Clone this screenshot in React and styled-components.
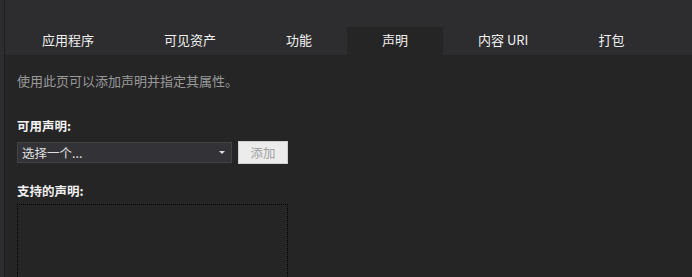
import React from 'react';
import styled, { createGlobalStyle } from 'styled-components';

const GlobalStyle = createGlobalStyle`
  html, body {
    margin: 0;
    padding: 0;
    background: #252526;
  }
`;

const Page = styled.div`
  width: 692px;
  height: 277px;
  display: flex;
  overflow: hidden;
  background: #252526;
  font-family: 'Segoe UI', 'Noto Sans CJK SC', 'Noto Sans', sans-serif;
  font-size: 12px;
  color: #f1f1f1;
`;

const SideStrip = styled.div`
  width: 4px;
  flex: none;
  background: #2d2d30;
  border-right: 1px solid #1e1e1f;
`;

const Main = styled.div`
  flex: 1;
  display: flex;
  flex-direction: column;
`;

const TopBand = styled.div`
  height: 27px;
  background: #2d2d30;
`;

const TabBar = styled.div`
  height: 28px;
  display: flex;
  padding-left: 2px;
  background: #2d2d30;
`;

const Tab = styled.div`
  padding: 0 35px;
  display: flex;
  align-items: center;
  padding-bottom: 3px;
  font-size: 13px;
  color: #f1f1f1;
  white-space: nowrap;
  background: ${(p) => (p.active ? '#252526' : 'transparent')};
`;

const Content = styled.div`
  flex: 1;
  display: flex;
  flex-direction: column;
  padding: 17px 0 0 12px;
`;

const Description = styled.div`
  line-height: 18px;
  color: #999999;
  font-size: 13px;
`;

const Label = styled.div`
  margin-top: ${(p) => p.gap}px;
  line-height: 18px;
  font-weight: bold;
  font-size: 12.5px;
  color: #f1f1f1;
`;

const SelectRow = styled.div`
  display: flex;
  align-items: center;
  gap: 6px;
  margin-top: 6px;
`;

const Select = styled.div`
  width: 205px;
  height: 19px;
  display: flex;
  align-items: center;
  justify-content: space-between;
  padding: 0 4px;
  box-sizing: content-box;
  background: #333337;
  border: 1px solid #434346;
  color: #e0e0e0;
  font-size: 12.5px;
`;

const Arrow = styled.span`
  width: 0;
  height: 0;
  margin-right: 2px;
  border-left: 3px solid transparent;
  border-right: 3px solid transparent;
  border-top: 3px solid #e0e0e0;
`;

const Button = styled.div`
  width: 48px;
  height: 21px;
  display: flex;
  align-items: center;
  justify-content: center;
  background: #ececec;
  border: 1px solid #cfcfcf;
  color: #a2a2a2;
  font-size: 12.5px;
`;

const DeclarationList = styled.div`
  margin-top: 4px;
  width: 269px;
  flex: 1;
  border: 1px dotted #000000;
  border-bottom: none;
`;

const tabs = ['应用程序', '可见资产', '功能', '声明', '内容 URI', '打包'];

export default function App() {
  return (
    <>
      <GlobalStyle />
      <Page>
        <SideStrip />
        <Main>
          <TopBand />
          <TabBar>
            {tabs.map((t) => (
              <Tab key={t} active={t === '声明'}>
                {t}
              </Tab>
            ))}
          </TabBar>
          <Content>
            <Description>使用此页可以添加声明并指定其属性。</Description>
            <Label gap={27}>可用声明:</Label>
            <SelectRow>
              <Select>
                <span>选择一个...</span>
                <Arrow />
              </Select>
              <Button>添加</Button>
            </SelectRow>
            <Label gap={18}>支持的声明:</Label>
            <DeclarationList />
          </Content>
        </Main>
      </Page>
    </>
  );
}
